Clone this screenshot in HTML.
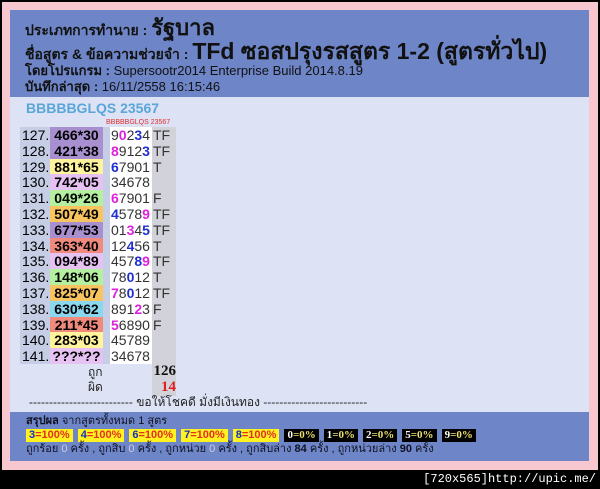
<!DOCTYPE html>
<html><head><meta charset="utf-8"><style>
*{margin:0;padding:0;box-sizing:border-box}
body{width:600px;height:489px;background:#000;position:relative;overflow:hidden;font-family:"Liberation Sans","Noto Sans CJK SC",sans-serif}
#pink{position:absolute;left:2px;top:2px;width:596px;height:468px;background:#f8c8d0}
#panel{position:absolute;left:10px;top:10px;width:579px;height:451px;background:#dde3f5}
#hdr{position:absolute;left:0;top:0;width:579px;height:87px;background:#6e86c8;color:#111}
#hdr div{position:absolute;left:15px;white-space:nowrap;line-height:20px}
.l1{top:8px;font-size:14px;font-weight:bold}
.l1 b{font-size:22px}
.l2{top:31px;font-size:14px;font-weight:bold}
.l2 b{font-size:23px}
.l3{font-size:13px}
.l3 span{font-weight:bold}
#bb{position:absolute;left:16px;top:89px;font-size:14px;font-weight:bold;color:#5aa6d8;line-height:18px}
#bb2{position:absolute;left:96px;top:108px;font-size:7px;color:#e03030;line-height:9px}
.row{position:absolute;left:10px;height:16px;font-size:14px;line-height:16px}
.n{position:absolute;left:0;width:90px;height:16px;background:#c6cee6;padding-left:2px}
.f{position:absolute;left:30px;width:53px;height:16px;font-weight:bold;text-align:center}
.d{position:absolute;left:90px;width:42px;height:16px;background:#fff;color:#333;padding-left:1px}
.t{position:absolute;left:132px;width:24px;height:16px;background:#d2d2da;color:#333;padding-left:1px}
.m{color:#e020e0;font-weight:bold}.b{color:#2030d0;font-weight:bold}
.P{background:#a890d0}.Y{background:#fff49c}.L{background:#e6c2f2}.G{background:#b4f0a0}.O{background:#f8c460}.R{background:#f08a7c}.C{background:#8ad8f0}
#sum{position:absolute;left:0;top:402px;width:579px;height:49px;background:#6e86c8;padding:3px 0 0 16px;font-size:11px;color:#112;line-height:14px}
.bx{display:inline-block;font-weight:bold;font-size:11px;padding:0 3px;margin-right:5px;height:13px;line-height:13px}
.y{background:#fff220;color:#1030c0}.y i{color:#e03020;font-style:normal}
.k{background:#000;color:#fff;font-family:"Liberation Serif",serif}.k i{color:#e8e070;font-style:normal}
</style></head><body>
<div id="pink"></div>
<div id="panel">
<div id="hdr">
<div class="l1">ประเภทการทำนาย : <b>รัฐบาล</b></div>
<div class="l2">ชื่อสูตร &amp; ข้อความช่วยจำ : <b>TFd ซอสปรุงรสสูตร 1-2 (สูตรทั่วไป)</b></div>
<div class="l3" style="top:51px"><span>โดยโปรแกรม :</span> Supersootr2014 Enterprise Build 2014.8.19</div>
<div class="l3" style="top:67px"><span>บันทึกล่าสุด :</span> 16/11/2558 16:15:46</div>
</div>
<div id="bb">BBBBBGLQS 23567</div>
<div id="bb2">BBBBBGLQS 23567</div>

<div class="row" style="top:117px"><div class="n">127.</div><div class="f P">466*30</div><div class="d">9<span class="m">0</span>2<span class="b">3</span>4</div><div class="t">TF</div></div>
<div class="row" style="top:133px"><div class="n">128.</div><div class="f P">421*38</div><div class="d"><span class="m">8</span>912<span class="b">3</span></div><div class="t">TF</div></div>
<div class="row" style="top:149px"><div class="n">129.</div><div class="f Y">881*65</div><div class="d"><span class="b">6</span>7901</div><div class="t">T</div></div>
<div class="row" style="top:164px"><div class="n">130.</div><div class="f L">742*05</div><div class="d">34678</div><div class="t"></div></div>
<div class="row" style="top:180px"><div class="n">131.</div><div class="f G">049*26</div><div class="d"><span class="m">6</span>7901</div><div class="t">F</div></div>
<div class="row" style="top:196px"><div class="n">132.</div><div class="f O">507*49</div><div class="d"><span class="b">4</span>578<span class="m">9</span></div><div class="t">TF</div></div>
<div class="row" style="top:212px"><div class="n">133.</div><div class="f P">677*53</div><div class="d">01<span class="m">3</span>4<span class="b">5</span></div><div class="t">TF</div></div>
<div class="row" style="top:228px"><div class="n">134.</div><div class="f R">363*40</div><div class="d">12<span class="b">4</span>56</div><div class="t">T</div></div>
<div class="row" style="top:243px"><div class="n">135.</div><div class="f L">094*89</div><div class="d">457<span class="b">8</span><span class="m">9</span></div><div class="t">TF</div></div>
<div class="row" style="top:259px"><div class="n">136.</div><div class="f G">148*06</div><div class="d">78<span class="b">0</span>12</div><div class="t">T</div></div>
<div class="row" style="top:275px"><div class="n">137.</div><div class="f O">825*07</div><div class="d"><span class="m">7</span>8<span class="b">0</span>12</div><div class="t">TF</div></div>
<div class="row" style="top:291px"><div class="n">138.</div><div class="f C">630*62</div><div class="d">891<span class="m">2</span>3</div><div class="t">F</div></div>
<div class="row" style="top:307px"><div class="n">139.</div><div class="f R">211*45</div><div class="d"><span class="m">5</span>6890</div><div class="t">F</div></div>
<div class="row" style="top:322px"><div class="n">140.</div><div class="f Y">283*03</div><div class="d">45789</div><div class="t"></div></div>
<div class="row" style="top:338px"><div class="n">141.</div><div class="f L">???*??</div><div class="d">34678</div><div class="t"></div></div>
<div style="position:absolute;left:142px;top:354px;width:24px;height:32px;background:#d2d2da"></div>
<div style="position:absolute;left:78px;top:355px;font-size:12px;color:#222;line-height:15px">ถูก</div>
<div style="position:absolute;left:78px;top:370px;font-size:12px;color:#222;line-height:15px">ผิด</div>
<div style="position:absolute;left:132px;top:353px;width:34px;text-align:right;font-size:15px;font-weight:bold;color:#111;font-family:'Liberation Serif',serif;line-height:16px">126</div>
<div style="position:absolute;left:132px;top:369px;width:34px;text-align:right;font-size:15px;font-weight:bold;color:#e02020;font-family:'Liberation Serif',serif;line-height:16px">14</div>
<div style="position:absolute;left:19px;top:385px;font-size:12px;color:#222;white-space:nowrap;line-height:15px">-------------------------- ขอให้โชคดี มั่งมีเงินทอง --------------------------</div>
<div id="sum">
<div style="height:13px;line-height:13px"><b>สรุปผล</b> จากสูตรทั้งหมด 1 สูตร</div>
<div style="height:15px"><span class="bx y">3<i>=100%</i></span><span class="bx y">4<i>=100%</i></span><span class="bx y">6<i>=100%</i></span><span class="bx y">7<i>=100%</i></span><span class="bx y">8<i>=100%</i></span><span class="bx k">0<i>=0%</i></span><span class="bx k">1<i>=0%</i></span><span class="bx k">2<i>=0%</i></span><span class="bx k">5<i>=0%</i></span><span class="bx k">9<i>=0%</i></span></div>
<div style="line-height:13px">ถูกร้อย <span style="color:#ccd">0</span> ครั้ง , ถูกสิบ <span style="color:#ccd">0</span> ครั้ง , ถูกหน่วย <span style="color:#ccd">0</span> ครั้ง , ถูกสิบล่าง <b>84</b> ครั้ง , ถูกหน่วยล่าง <b>90</b> ครั้ง</div>
</div>
</div>
<div style="position:absolute;right:4px;top:472px;font-size:12px;color:#fff;font-family:'Liberation Mono',monospace;line-height:15px">[720x565]http://upic.me/</div>
</body></html>
